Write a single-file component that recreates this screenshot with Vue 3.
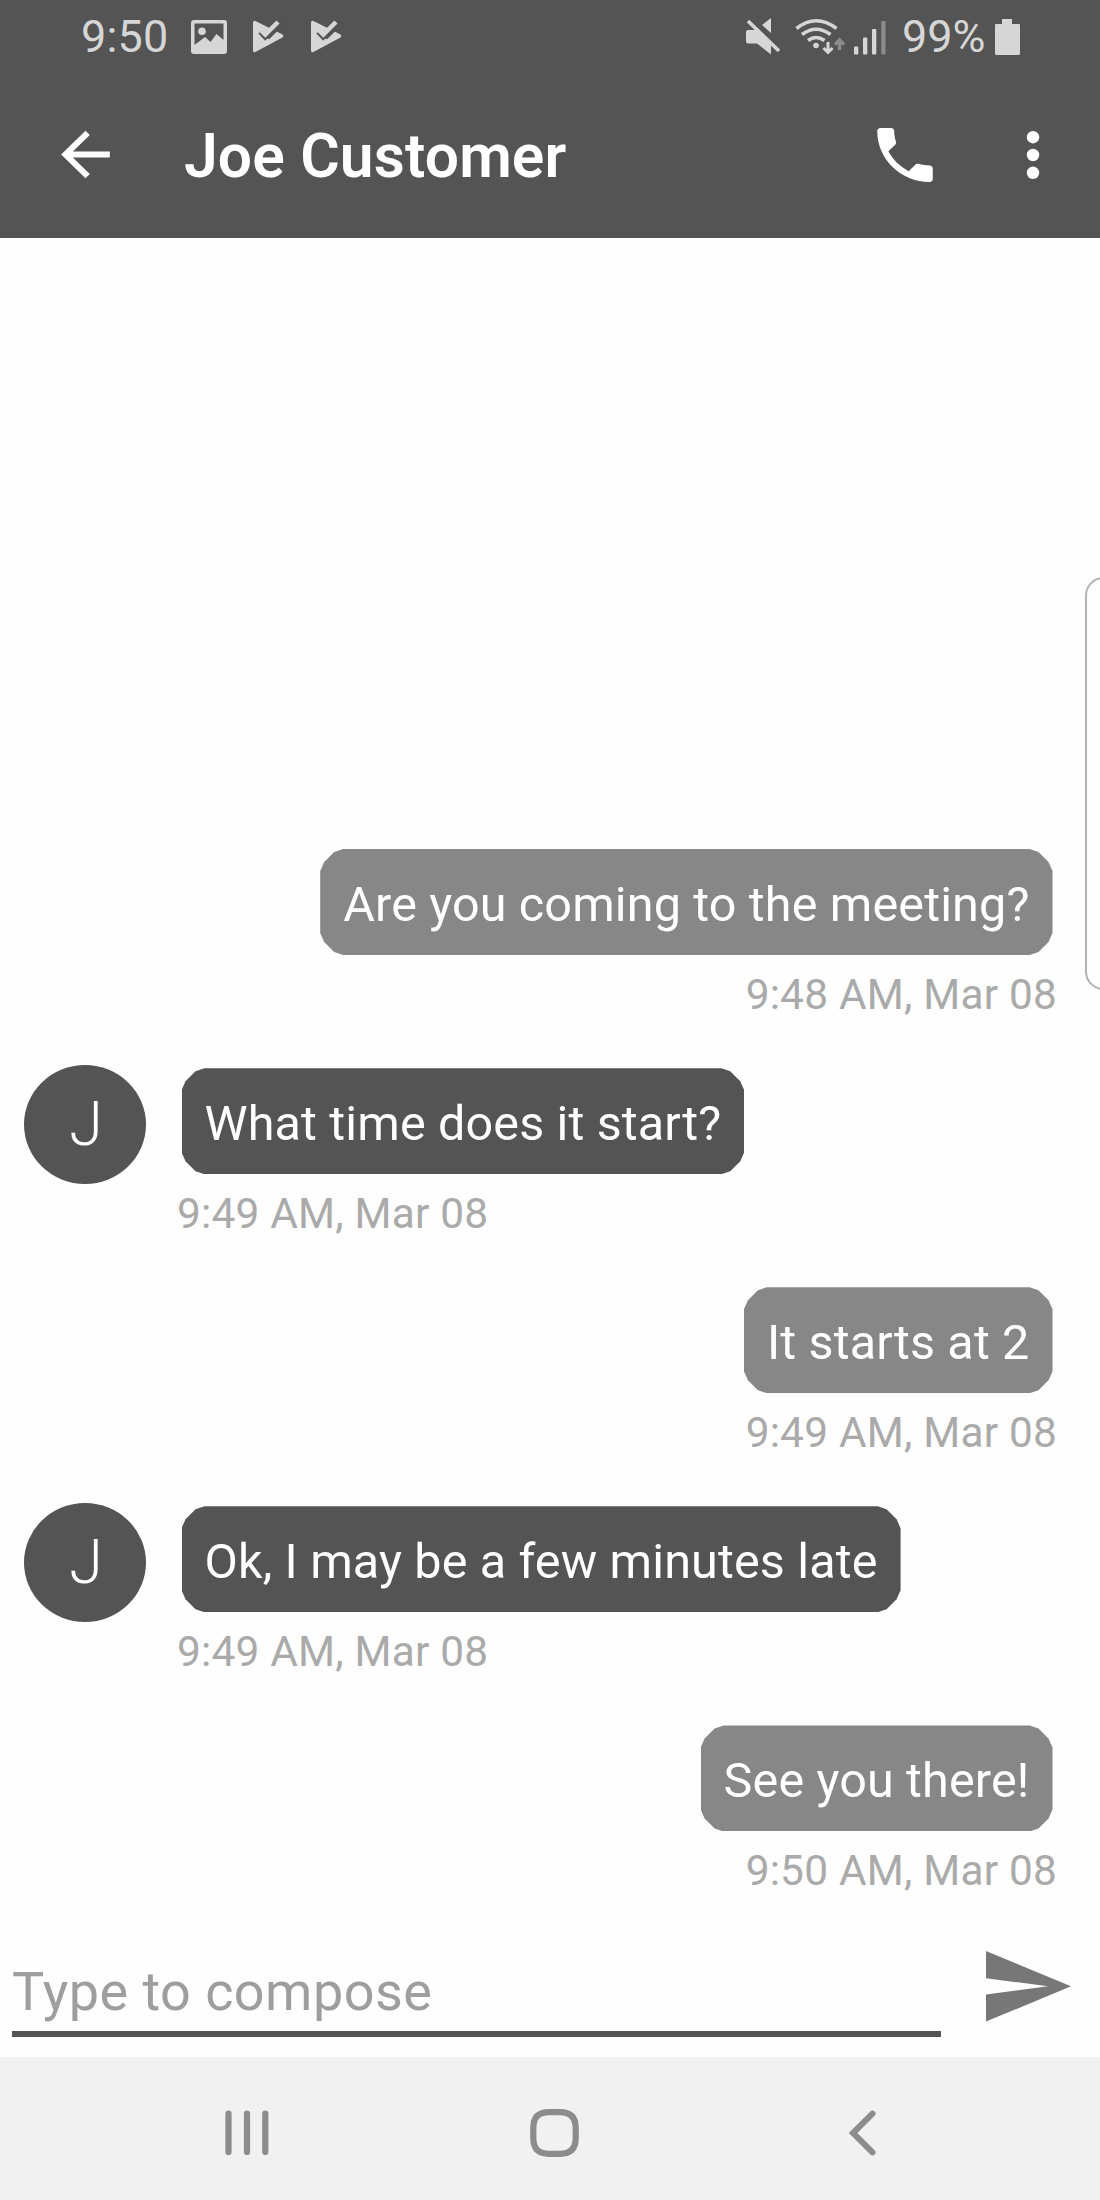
<template>
  <div class="screen">
    <header class="header">
      <div class="status-bar">
        <span class="clock">9:50</span>
        <svg class="icon-picture" width="36" height="34" viewBox="0 0 36 34">
          <path fill="#d6d6d6" fill-rule="evenodd" d="M3 0H33Q36 0 36 3V31Q36 34 33 34H3Q0 34 0 31V3Q0 0 3 0ZM3.5 3.6V25L14 17L19.5 22L25.5 14L32.5 20V3.6Z" />
          <circle cx="11" cy="11.3" r="3.8" fill="#d6d6d6" />
        </svg>
        <svg v-for="n in 2" :key="n" class="icon-play" width="31" height="33" viewBox="0 0 31 33">
          <path fill="#d6d6d6" d="M0 2.5Q0 0 2.4 1L29.5 14.6Q31 16 29.5 17.4L2.4 32Q0 33 0 30.5Z" />
          <path fill="none" stroke="#545454" stroke-width="7" d="M12 13.2L15.5 15L29 1.5" />
          <path fill="none" stroke="#545454" stroke-width="3" d="M6.5 12.5L12.2 18.6L22 9" />
          <path fill="none" stroke="#d6d6d6" stroke-width="4.4" d="M8.3 10.6L12.3 14.6L25 2" />
        </svg>
        <div class="spacer"></div>
        <svg class="icon-system" width="144" height="40" viewBox="744 16 144 40">
          <!-- muted speaker -->
          <path fill="#d6d6d6" d="M771 17V32L762 24ZM746 31Q746 29 748 29H754L757 27L771 41V53.5L757 42.5H748Q746 42.5 746 40.5Z" />
          <path stroke="#545454" stroke-width="2" d="M751 18L781 48" />
          <path stroke="#d6d6d6" stroke-width="3.6" d="M748 20L779 50" />
          <!-- wifi -->
          <g fill="none" stroke="#d6d6d6" stroke-width="3.6">
            <path d="M796.5 27.5Q816 12 836.5 27.5" />
            <path d="M802 33.5Q816 23 830.5 33.5" />
            <path d="M808 39.5Q816 33.5 824.5 39.5" />
            <path d="M828 41V52M823.5 47L828 51.5L832.5 47" stroke-width="3" />
            <path d="M839.5 49V39M835 43.5L839.5 39L844 43.5" stroke="#8c8c8c" stroke-width="3.4" />
          </g>
          <circle cx="816" cy="44.5" r="2.8" fill="#d6d6d6" />
          <!-- signal -->
          <rect x="854" y="45.5" width="4.3" height="8" rx="1" fill="#d6d6d6" />
          <rect x="863" y="36.5" width="4.3" height="17" rx="1" fill="#d6d6d6" />
          <rect x="872" y="28" width="4.3" height="25.5" rx="1" fill="#d6d6d6" />
          <rect x="881.3" y="20" width="4.2" height="33.5" rx="1" fill="#8c8c8c" />
        </svg>
        <span class="percent">99%</span>
        <svg class="icon-battery" width="25" height="36" viewBox="0 0 25 36">
          <path fill="#d6d6d6" d="M7 0H17V5H24Q25 5 25 6V34.5Q25 36 23.5 36H1.5Q0 36 0 34.5V6Q0 5 1 5H7Z" />
        </svg>
      </div>
      <div class="app-bar">
        <svg class="icon-back" width="73" height="71" viewBox="0 0 24 24" preserveAspectRatio="none">
          <path fill="#fff" d="M20 11H7.83l5.59-5.59L12 4l-8 8 8 8 1.41-1.41L7.83 13H20v-2z" />
        </svg>
        <h1 class="title">{{ contact }}</h1>
        <div class="spacer"></div>
        <svg class="icon-phone" width="74" height="72" viewBox="0 0 24 24" preserveAspectRatio="none">
          <path fill="#fff" d="M6.62 10.79c1.44 2.83 3.76 5.14 6.59 6.59l2.2-2.2c.27-.27.67-.36 1.02-.24 1.12.37 2.33.57 3.57.57.55 0 1 .45 1 1V20c0 .55-.45 1-1 1-9.39 0-17-7.61-17-17 0-.55.45-1 1-1h3.5c.55 0 1 .45 1 1 0 1.25.2 2.45.57 3.57.11.35.03.74-.25 1.02l-2.2 2.2z" />
        </svg>
        <svg class="icon-more" width="14" height="50" viewBox="0 0 14 50">
          <circle cx="7" cy="7.2" r="6.2" fill="#fff" />
          <circle cx="7" cy="25" r="6.2" fill="#fff" />
          <circle cx="7" cy="42.8" r="6.2" fill="#fff" />
        </svg>
      </div>
    </header>

    <main class="chat">
      <div v-for="(message, index) in messages" :key="index" class="message" :class="message.from">
        <div v-if="message.from === 'theirs'" class="avatar">{{ contact[0] }}</div>
        <div class="message-body">
          <div class="bubble">{{ message.text }}</div>
          <div class="time">{{ message.time }}</div>
        </div>
      </div>
    </main>

    <div class="compose">
      <input v-model="draft" class="compose-input" type="text" placeholder="Type to compose">
      <svg class="icon-send" width="85" height="71" viewBox="0 0 85 71">
        <path fill="#777" d="M0 0L85 35.3L0 70.6V43.5L62 35.3L0 27.2Z" />
      </svg>
    </div>

    <nav class="nav-bar">
      <svg width="44" height="46" viewBox="0 0 44 46">
        <path fill="none" stroke="#8c8c8c" stroke-width="6.2" stroke-linecap="round" d="M3.5 3.6V42M22 3.6V42M40.3 3.6V42" />
      </svg>
      <svg class="icon-home" width="49" height="48" viewBox="0 0 49 48">
        <path fill="none" stroke="#8c8c8c" stroke-width="6.2" d="M19 3.2H30Q45.7 3.2 45.7 19V29Q45.7 44.8 30 44.8H19Q3.3 44.8 3.3 29V19Q3.3 3.2 19 3.2Z" />
      </svg>
      <svg width="27" height="46" viewBox="0 0 27 46">
        <path fill="none" stroke="#8c8c8c" stroke-width="6" stroke-linecap="round" d="M23.5 3.6L4 23L23.5 42.4" />
      </svg>
    </nav>

    <div class="edge-handle"></div>
  </div>
</template>

<script setup>
import { ref } from 'vue';

const contact = 'Joe Customer';
const draft = ref('');

const messages = ref([
  { from: 'mine', text: 'Are you coming to the meeting?', time: '9:48 AM, Mar 08' },
  { from: 'theirs', text: 'What time does it start?', time: '9:49 AM, Mar 08' },
  { from: 'mine', text: 'It starts at 2', time: '9:49 AM, Mar 08' },
  { from: 'theirs', text: 'Ok, I may be a few minutes late', time: '9:49 AM, Mar 08' },
  { from: 'mine', text: 'See you there!', time: '9:50 AM, Mar 08' }
]);
</script>

<style>
body {
  margin: 0;
  background: #fefefe;
}
</style>

<style scoped>
.screen {
  position: relative;
  display: flex;
  flex-direction: column;
  width: 1100px;
  height: 2200px;
  overflow: hidden;
  background: #fefefe;
  font-family: Roboto, "Liberation Sans", sans-serif;
}

svg {
  display: block;
  flex-shrink: 0;
}

.spacer {
  flex: 1;
}

.header {
  height: 237.5px;
  background: #545454;
}

.status-bar {
  display: flex;
  align-items: center;
  height: 73px;
  padding: 0 80px;
  color: #d6d6d6;
  font-size: 45px;
}

.clock {
  width: 110px;
  margin-left: 1px;
  letter-spacing: 0.2px;
}

.icon-play {
  margin-left: 26px;
}

.icon-play + .icon-play {
  margin-left: 27px;
}

.percent {
  width: 92px;
  margin-left: 14px;
  white-space: nowrap;
}

.icon-battery {
  margin-left: 1px;
}

.app-bar {
  display: flex;
  align-items: center;
  height: 163px;
  padding: 0 60px 0 49px;
}

.title {
  margin: 5px 0 0 62px;
  color: #fff;
  font-size: 60.5px;
  font-weight: 560;
  letter-spacing: 0.15px;
  line-height: 80px;
  white-space: nowrap;
}

.icon-more {
  margin-left: 84px;
}

.chat {
  display: flex;
  flex: 1;
  flex-direction: column;
  justify-content: flex-end;
}

.message {
  display: flex;
  height: 219.1px;
  padding: 0 47.5px 0 24px;
}

.mine {
  justify-content: flex-end;
}

.message-body {
  display: flex;
  flex-direction: column;
  align-items: flex-start;
}

.mine .message-body {
  align-items: flex-end;
}

.avatar {
  width: 122px;
  height: 119px;
  box-sizing: border-box;
  margin: -3px 35.5px 0 0;
  padding-left: 2px;
  border-radius: 50%;
  background: #545454;
  color: #fff;
  font-size: 61px;
  font-weight: 300;
  line-height: 119px;
  text-align: center;
}

.bubble {
  height: 106px;
  padding: 0 23px;
  background: #545454;
  color: #fff;
  font-size: 48.5px;
  letter-spacing: 0.15px;
  line-height: 111px;
  white-space: nowrap;
  clip-path: polygon(
    0 22px, 4px 13px, 14px 3px, 23px 0,
    calc(100% - 23px) 0, calc(100% - 14px) 3px, calc(100% - 4px) 13px, 100% 22px,
    100% calc(100% - 22px), calc(100% - 4px) calc(100% - 13px), calc(100% - 14px) calc(100% - 3px), calc(100% - 23px) 100%,
    23px 100%, 14px calc(100% - 3px), 4px calc(100% - 13px), 0 calc(100% - 22px)
  );
}

.mine .bubble {
  background: #878787;
}

.time {
  margin: 15px -4.5px 0;
  color: #aaa;
  font-size: 42.4px;
  letter-spacing: 0.2px;
  line-height: 50px;
  white-space: nowrap;
}

.compose {
  display: flex;
  align-items: flex-start;
  height: 112.5px;
  padding: 0 29px 0 12px;
}

.compose-input {
  width: 929px;
  height: 92.5px;
  box-sizing: border-box;
  padding: 7px 0 0;
  border: none;
  border-bottom: 6.5px solid #545454;
  border-radius: 0;
  outline: none;
  background: transparent;
  font-family: inherit;
  font-size: 54px;
  letter-spacing: 0.45px;
}

.compose-input::placeholder {
  color: #9e9e9e;
  opacity: 1;
}

.icon-send {
  margin: 6px 0 0 45px;
}

.nav-bar {
  display: flex;
  align-items: center;
  justify-content: space-between;
  height: 143px;
  box-sizing: border-box;
  padding: 8px 224.5px 0 224.5px;
  background: #f1f1f1;
}

.icon-home {
  margin-right: 8px;
}

/* side panel grip, lies over the chat */
.edge-handle {
  position: absolute;
  top: 577px;
  right: -22px;
  width: 33px;
  height: 409px;
  border: 2px solid #b4b4b4;
  border-radius: 22px;
}
</style>
